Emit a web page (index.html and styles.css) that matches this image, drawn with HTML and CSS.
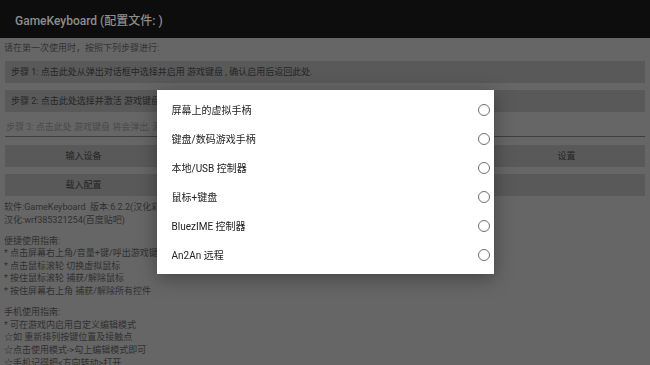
FILE: index.html
```html
<!DOCTYPE html>
<html lang="zh-CN">
<head>
    <meta charset="UTF-8">
    <meta name="viewport" content="width=device-width, initial-scale=1.0">
    <title>GameKeyboard</title>
    <link rel="stylesheet" href="styles.css">
</head>
<body>
    <header class="toolbar">
        <h1>GameKeyboard (配置文件: )</h1>
    </header>

    <main class="content">
        <p class="intro">请在第一次使用时，按照下列步骤进行:</p>

        <div class="step">步骤 1: 点击此处从弹出对话框中选择并启用 游戏键盘 , 确认启用后返回此处.</div>
        <div class="step">步骤 2: 点击此处选择并激活 游戏键盘 作为当前输入法.</div>
        <div class="step-hint">步骤 3: 点击此处 游戏键盘 将会弹出, 测试是否可以正常使用.</div>

        <div class="btn-row">
            <div class="btn">输入设备</div>
            <div class="btn">键盘布局</div>
            <div class="btn">游戏配置</div>
            <div class="btn">设置</div>
        </div>
        <div class="btn-row">
            <div class="btn">载入配置</div>
            <div class="btn">保存配置</div>
            <div class="btn">删除配置</div>
            <div class="btn"></div>
        </div>

        <div class="info">
            <p>软件:GameKeyboard&nbsp; 版本:6.2.2(汉化彩色版)<br>
            汉化:wrf385321254(百度贴吧)</p>
            <p>便捷使用指南:<br>
            * 点击屏幕右上角/音量+键/呼出游戏键盘<br>
            * 点击鼠标滚轮 切换虚拟鼠标<br>
            * 按住鼠标滚轮 捕获/解除鼠标<br>
            * 按住屏幕右上角 捕获/解除所有控件</p>
            <p>手机使用指南:<br>
            * 可在游戏内启用自定义编辑模式<br>
            ☆如 重新排列按键位置及接触点<br>
            ☆点击使用模式-&gt;勾上编辑模式即可<br>
            ☆手机记得把&lt;方向转动&gt;打开</p>
        </div>
    </main>

    <div class="scrim">
        <div class="dialog">
            <div class="option"><span>屏幕上的虚拟手柄</span><i class="radio"></i></div>
            <div class="option"><span>键盘/数码游戏手柄</span><i class="radio"></i></div>
            <div class="option"><span>本地/USB 控制器</span><i class="radio"></i></div>
            <div class="option"><span>鼠标+键盘</span><i class="radio"></i></div>
            <div class="option"><span>BluezIME 控制器</span><i class="radio"></i></div>
            <div class="option"><span>An2An 远程</span><i class="radio"></i></div>
        </div>
    </div>
</body>
</html>
```

FILE: styles.css
```css
body {
  margin: 0;
  height: 365px;
  overflow: hidden;
  font-family: Roboto, "Noto Sans CJK SC", sans-serif;
  background-color: #666666;
  color: #2e2e2e;
}

.toolbar {
  height: 38px;
  display: flex;
  align-items: center;
  padding-left: 15px;
  background-color: #0d0d0d;
}

.toolbar h1 {
  margin: 0;
  font-size: 12px;
  font-weight: 500;
  color: #8e8e8e;
}

.content {
  padding: 0 5px;
  font-size: 9px;
}

.intro {
  margin: 0 0 7px -1px;
  padding-top: 4px;
  line-height: 12px;
  color: #333333;
}

.step {
  height: 22px;
  line-height: 22px;
  margin-bottom: 7px;
  padding-left: 6px;
  background-color: #595959;
  color: #252525;
  white-space: nowrap;
  overflow: hidden;
}

.step-hint {
  margin-top: -7px;
  padding: 9px 1px 3px;
  line-height: 12px;
  border-bottom: 1px solid #3e3e3e;
  margin-bottom: 8px;
  color: #4a4a4a;
}

.btn-row {
  display: flex;
  gap: 4px;
  margin-bottom: 7px;
}

.btn {
  flex: 1;
  height: 22px;
  line-height: 22px;
  text-align: center;
  background-color: #595959;
  color: #252525;
}

.info {
  margin-top: -2px;
  margin-left: -1px;
  color: #303030;
}

.info p {
  margin: 0 0 8.5px;
  line-height: 12.6px;
}

.scrim {
  position: fixed;
  inset: 0;
  display: flex;
  justify-content: center;
  align-items: center;
}

.dialog {
  width: 337px;
  padding: 5px 0;
  margin-top: -1px;
  background-color: #ffffff;
  box-shadow: 0 4px 18px rgba(0, 0, 0, 0.35);
}

.option {
  height: 29px;
  display: flex;
  align-items: center;
  justify-content: space-between;
  padding: 0 4px 0 15px;
  font-size: 10px;
  color: #222222;
}

.radio {
  width: 10px;
  height: 10px;
  border: 1.2px solid #6f6f6f;
  border-radius: 50%;
}
```
